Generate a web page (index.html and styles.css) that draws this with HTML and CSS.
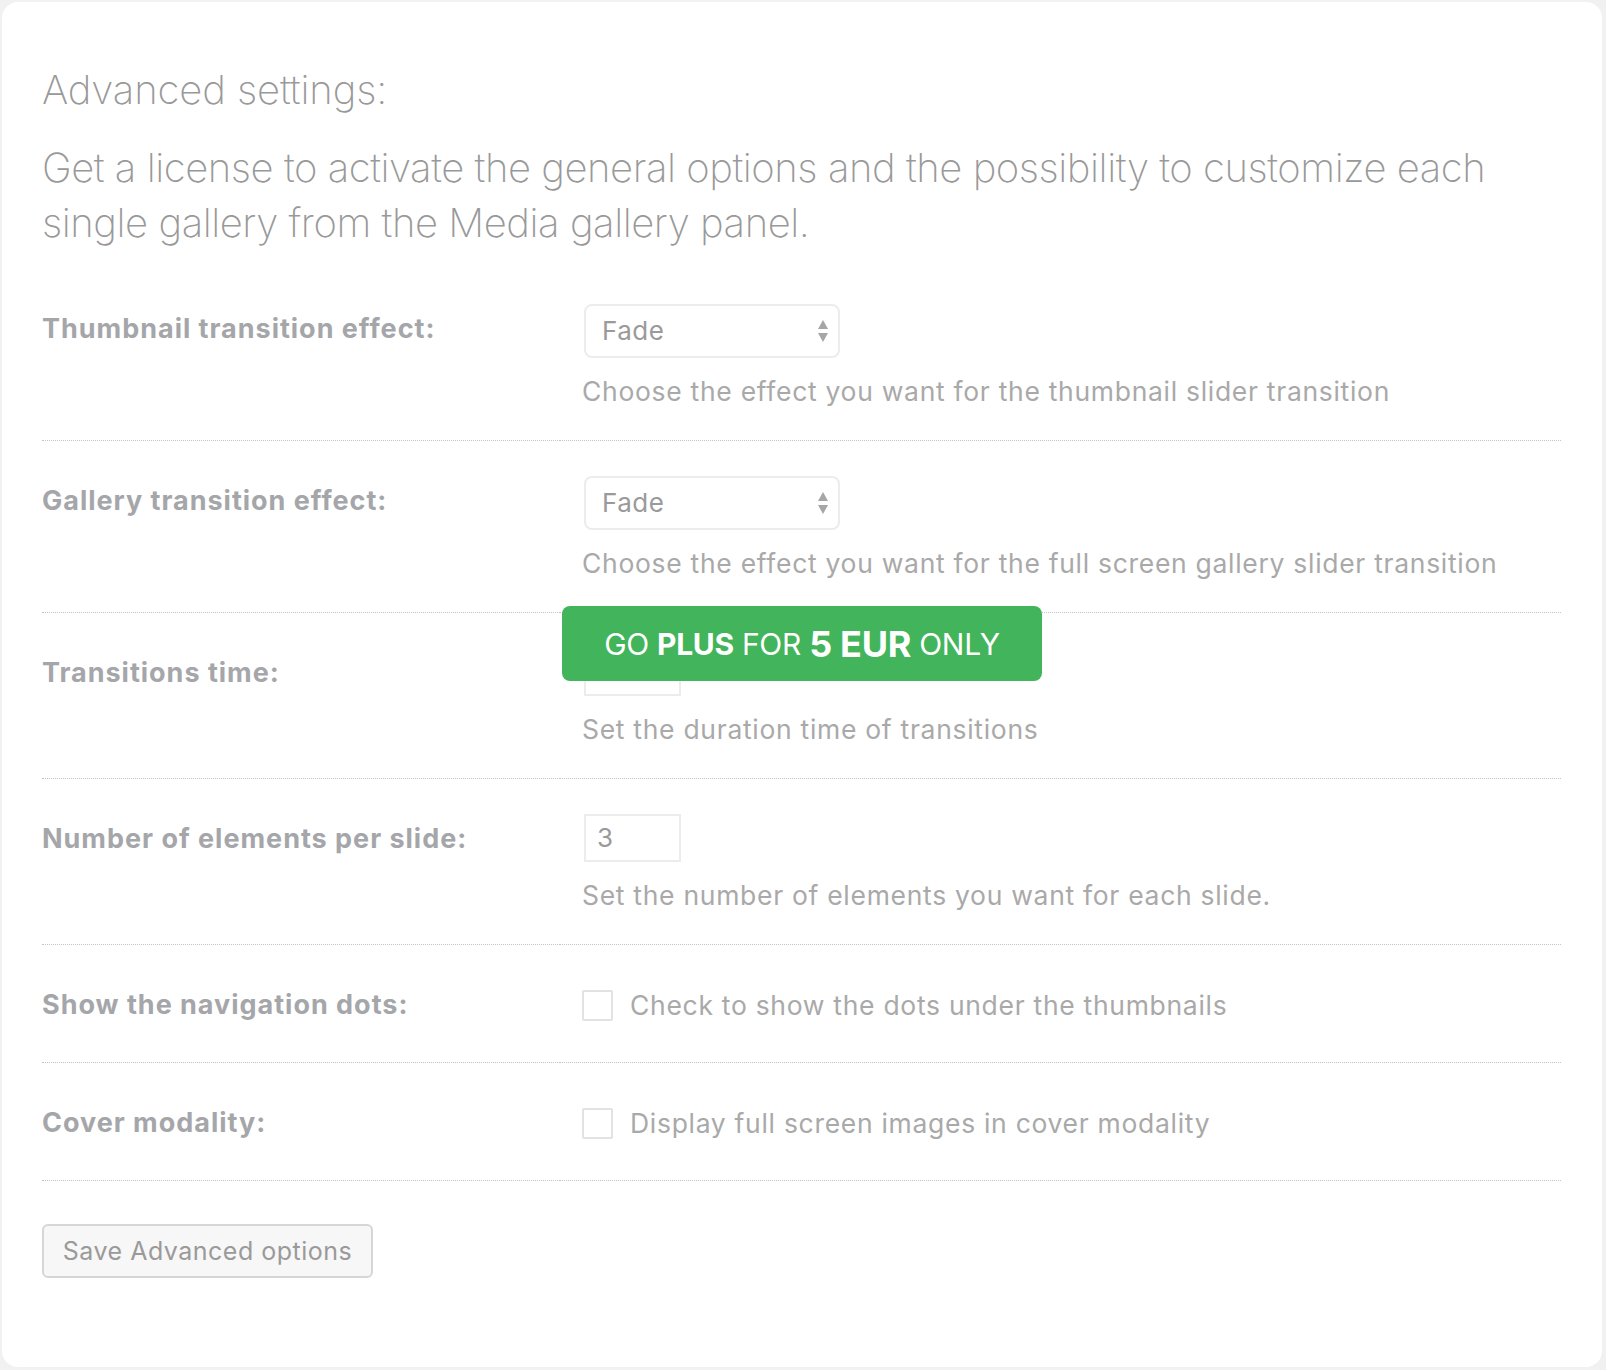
FILE: index.html
```html
<!DOCTYPE html>
<html lang="en">
<head>
<meta charset="utf-8">
<title>Advanced settings</title>
<link rel="stylesheet" href="styles.css">
</head>
<body>
<div class="card">
  <h2 class="title">Advanced settings:</h2>
  <p class="intro">Get a license to activate the general options and the possibility to customize each single gallery from the Media gallery panel.</p>

  <div class="table">
    <div class="row">
      <div class="label">Thumbnail transition effect:</div>
      <div class="field">
        <div class="select">
          <span>Fade</span>
          <svg class="arrows" width="12" height="26" viewBox="0 0 12 26"><path d="M6 2 L11 11 L1 11 Z" fill="#a6a6a6"/><path d="M1 15 L11 15 L6 24 Z" fill="#a6a6a6"/></svg>
        </div>
        <div class="desc">Choose the effect you want for the thumbnail slider transition</div>
      </div>
    </div>

    <div class="row">
      <div class="label">Gallery transition effect:</div>
      <div class="field">
        <div class="select">
          <span>Fade</span>
          <svg class="arrows" width="12" height="26" viewBox="0 0 12 26"><path d="M6 2 L11 11 L1 11 Z" fill="#a6a6a6"/><path d="M1 15 L11 15 L6 24 Z" fill="#a6a6a6"/></svg>
        </div>
        <div class="desc">Choose the effect you want for the full screen gallery slider transition</div>
      </div>
    </div>

    <div class="row row-promo">
      <div class="label">Transitions time:</div>
      <div class="field">
        <div class="num"></div>
        <div class="desc">Set the duration time of transitions</div>
        <a class="promo">GO <b>PLUS</b> FOR <b class="big">5 EUR</b> ONLY</a>
      </div>
    </div>

    <div class="row">
      <div class="label">Number of elements per slide:</div>
      <div class="field">
        <div class="num">3</div>
        <div class="desc">Set the number of elements you want for each slide.</div>
      </div>
    </div>

    <div class="row">
      <div class="label">Show the navigation dots:</div>
      <div class="field check-field">
        <span class="box"></span>
        <span class="check-text">Check to show the dots under the thumbnails</span>
      </div>
    </div>

    <div class="row">
      <div class="label">Cover modality:</div>
      <div class="field check-field">
        <span class="box"></span>
        <span class="check-text">Display full screen images in cover modality</span>
      </div>
    </div>
  </div>

  <div class="actions">
    <button class="save">Save Advanced options</button>
  </div>
</div>
</body>
</html>
```

FILE: styles.css
```css
html, body {
  margin: 0;
  padding: 0;
}
body {
  background: #f1f1f1;
  padding: 2px 4px 3px 2px;
  font-family: Inter, "Liberation Sans", sans-serif;
}
.card {
  background: #ffffff;
  border-radius: 16px;
  height: 1365px;
  box-sizing: border-box;
  padding: 0 40px 0 40px;
  overflow: hidden;
}
.title {
  margin: 0;
  padding-top: 62px;
  font-weight: 200;
  font-size: 40px;
  line-height: 52px;
  color: #999999;
  letter-spacing: -0.1px;
}
.intro {
  margin: 24px 0 0 0;
  font-weight: 200;
  font-size: 40px;
  line-height: 55px;
  color: #999999;
  letter-spacing: -0.45px;
  max-width: 1500px;
}
.table {
  margin-top: 19px;
}
.row {
  display: grid;
  grid-template-columns: 518px 1001px;
}
.label, .field {
  border-bottom: 1px dotted #c4c4c4;
}
.label {
  padding-top: 42px;
  font-size: 27px;
  line-height: 36px;
  font-weight: 700;
  color: #a5a6aa;
  letter-spacing: 0.98px;
}
.field {
  position: relative;
  padding: 35px 0 31px 24px;
}
.select {
  position: relative;
  width: 256px;
  height: 54px;
  box-sizing: border-box;
  border: 2px solid #ececec;
  border-radius: 8px;
  padding-left: 16px;
  font-size: 26px;
  line-height: 50px;
  color: #9a9a9a;
  letter-spacing: 0.5px;
}
.arrows {
  position: absolute;
  right: 9px;
  top: 12px;
}
.num {
  width: 97px;
  height: 48px;
  box-sizing: border-box;
  border: 2px solid #ececec;
  padding-left: 11px;
  font-size: 26px;
  line-height: 44px;
  color: #9a9a9a;
}
.desc {
  margin-top: 15px;
  margin-left: -2px;
  font-size: 26.5px;
  line-height: 36px;
  color: #a9a9a9;
  letter-spacing: 0.7px;
}
.check-field {
  display: flex;
  align-items: center;
  padding: 42px 0 39px 24px;
}
.box {
  width: 31px;
  height: 31px;
  box-sizing: border-box;
  border: 2px solid #e2e2e2;
  border-radius: 2px;
  margin-left: -2px;
}
.check-text {
  margin-left: 17px;
  font-size: 26.5px;
  line-height: 36px;
  color: #a9a9a9;
  letter-spacing: 0.7px;
}
.promo {
  position: absolute;
  left: 2px;
  top: -7px;
  width: 480px;
  height: 75px;
  border-radius: 8px;
  background: #42b45b;
  color: #ffffff;
  display: flex;
  align-items: center;
  justify-content: center;
  font-size: 30px;
  font-weight: 400;
  white-space: pre;
  letter-spacing: -0.3px;
}
.promo b {
  font-weight: 700;
}
.promo .big {
  font-size: 36px;
}
.actions {
  padding-top: 43px;
}
.save {
  width: 331px;
  height: 54px;
  background: #f7f7f7;
  border: 2px solid #d6d6d6;
  border-radius: 6px;
  font-family: Inter, "Liberation Sans", sans-serif;
  font-size: 25px;
  letter-spacing: 0.5px;
  color: #9a9a9a;
  padding: 0;
}
```
